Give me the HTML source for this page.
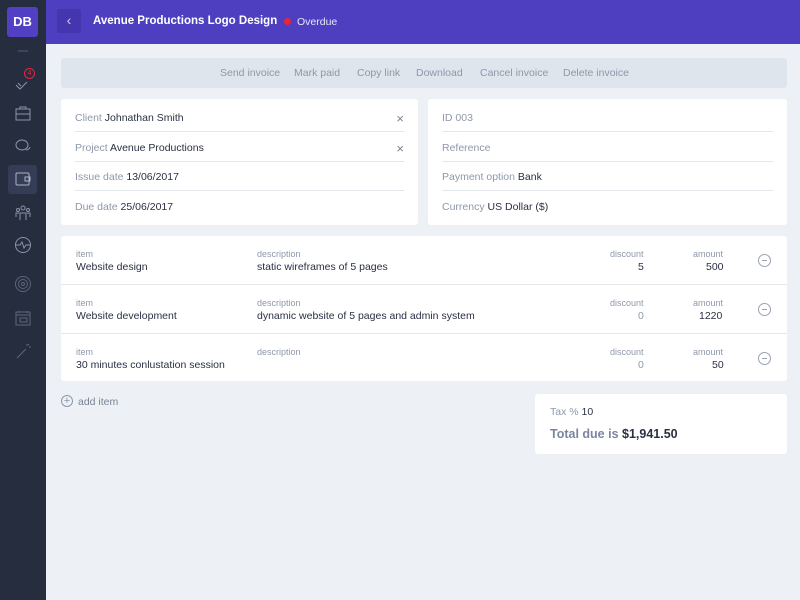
<!DOCTYPE html><html><head><style>
*{margin:0;padding:0;box-sizing:border-box}
body{width:800px;height:600px;background:#edf1f5;font-family:"Liberation Sans",sans-serif;position:relative;overflow:hidden;font-size:10.5px;color:#2a3042}
.side{position:absolute;left:0;top:0;width:46px;height:600px;background:#262d3f}
.logo{position:absolute;left:7px;top:7px;width:31px;height:30px;background:#5140c4;border-radius:3px;color:#fff;font-weight:bold;font-size:13px;text-align:center;line-height:30px}
.hdr{position:absolute;left:46px;top:0;width:754px;height:44px;background:#4e3fc0}
.back{position:absolute;left:11px;top:9px;width:24px;height:24px;background:#4536b0;border-radius:2px;color:#cfcbf0;font-size:14px;text-align:center;line-height:23px}
.title{position:absolute;left:47px;top:15px;color:#fff;font-weight:bold;font-size:11.5px}
.dot{position:absolute;left:238px;top:18px;width:7px;height:7px;border-radius:50%;background:#e8233e}
.od{position:absolute;left:251px;top:16px;color:#e8e6f8;font-size:10.5px}
.bar{position:absolute;left:61px;top:58px;width:726px;height:30px;background:#dfe5ec;border-radius:3px;color:#8e98ab;font-size:10.5px}
.bar span{position:absolute;top:9px}
.card{position:absolute;background:#fff;border-radius:3px}
.row{position:absolute;left:14px;right:14px;height:29px;border-bottom:1px solid #e3e7ec;line-height:31px}
.row.last{border:none}
.l{color:#8e98ab}
.x{position:absolute;right:0;color:#7a8396;font-size:13px}
.it{position:absolute;left:0;width:726px;height:49px;border-bottom:1px solid #e3e7ec}
.lab{position:absolute;top:13px;font-size:9px;color:#8e98ab}
.val{position:absolute;top:25px;font-size:10.5px}
.minus{position:absolute;left:697px;top:18px;width:13px;height:13px;border:1px solid #9aa2b2;border-radius:50%}
.minus:after{content:"";position:absolute;left:3px;top:5px;width:5px;height:1px;background:#9aa2b2}
.ic{position:absolute;left:13px;width:20px;height:20px}
</style></head><body>
<div class="side">
<div class="logo">DB</div>
<div style="position:absolute;left:18px;top:50px;width:10px;height:2px;background:#3c455a"></div>
<svg class="ic" style="top:72px" viewBox="0 0 20 20" fill="none" stroke="#8a93a8" stroke-width="1"><path d="M3 13l4 4 7-7M5 11l3 3"/></svg>
<div style="position:absolute;left:24px;top:68px;width:11px;height:11px;border-radius:50%;border:1px solid #e8233e;color:#e8233e;font-size:7px;text-align:center;line-height:9px">4</div>
<svg class="ic" style="top:104px" viewBox="0 0 20 20" fill="none" stroke="#8a93a8" stroke-width="1"><rect x="3" y="5" width="14" height="11"/><path d="M7 5V3h6v2M3 10h14"/></svg>
<svg class="ic" style="top:136px" viewBox="0 0 20 20" fill="none" stroke="#8a93a8" stroke-width="1"><ellipse cx="9" cy="9" rx="6" ry="5"/><path d="M13 14a5 4 0 0 0 4-3"/></svg>
<div style="position:absolute;left:8px;top:165px;width:29px;height:29px;background:#343d55;border-radius:3px"></div>
<svg class="ic" style="top:169px" viewBox="0 0 20 20" fill="none" stroke="#aab2c4" stroke-width="1"><rect x="3" y="4" width="13" height="12" rx="1"/><rect x="12" y="8" width="5" height="4"/></svg>
<svg class="ic" style="top:203px" viewBox="0 0 20 20" fill="none" stroke="#8a93a8" stroke-width="1"><circle cx="10" cy="5" r="2"/><circle cx="5" cy="7" r="1.5"/><circle cx="15" cy="7" r="1.5"/><path d="M7 17v-7h6v7M3 14v-4h3M17 14v-4h-3"/></svg>
<svg class="ic" style="top:235px" viewBox="0 0 20 20" fill="none" stroke="#8a93a8" stroke-width="1"><circle cx="10" cy="10" r="7.5"/><path d="M3 10h4l2-3 2 6 2-3h4"/></svg>
<svg class="ic" style="top:274px" viewBox="0 0 20 20" fill="none" stroke="#5d6679" stroke-width="1"><circle cx="10" cy="10" r="7.5"/><circle cx="10" cy="10" r="4.5"/><circle cx="10" cy="10" r="1.5"/></svg>
<svg class="ic" style="top:308px" viewBox="0 0 20 20" fill="none" stroke="#5d6679" stroke-width="1"><rect x="3" y="4" width="14" height="13"/><path d="M3 7h14M6 3v2M14 3v2M7 10h7v4H7z"/></svg>
<svg class="ic" style="top:341px" viewBox="0 0 20 20" fill="none" stroke="#5d6679" stroke-width="1"><path d="M4 17l9-9M14 3v2M16 6h2M15 4l1-1"/></svg>
</div>
<div class="hdr"><div class="back">&#8249;</div><div class="title">Avenue Productions Logo Design</div><div class="dot"></div><div class="od">Overdue</div></div>
<div class="bar"><span style="left:159px">Send invoice</span><span style="left:233px">Mark paid</span><span style="left:296px">Copy link</span><span style="left:355px">Download</span><span style="left:419px">Cancel invoice</span><span style="left:502px">Delete invoice</span></div>
<div class="card" style="left:61px;top:99px;width:357px;height:126px">
<div class="row" style="top:4px"><span class="l">Client</span> Johnathan Smith<span class="x">×</span></div>
<div class="row" style="top:34px"><span class="l">Project</span> Avenue Productions<span class="x">×</span></div>
<div class="row" style="top:63px"><span class="l">Issue date</span> 13/06/2017</div>
<div class="row last" style="top:93px"><span class="l">Due date</span> 25/06/2017</div>
</div>
<div class="card" style="left:428px;top:99px;width:359px;height:126px">
<div class="row" style="top:4px"><span class="l">ID</span> <span class="l">003</span></div>
<div class="row" style="top:34px"><span class="l">Reference</span></div>
<div class="row" style="top:63px"><span class="l">Payment option</span> Bank</div>
<div class="row last" style="top:93px"><span class="l">Currency</span> US Dollar ($)</div>
</div>
<div class="card" style="left:61px;top:236px;width:726px;height:145px">
<div class="it" style="top:0"><span class="lab" style="left:15px">item</span><span class="val" style="left:15px">Website design</span><span class="lab" style="left:196px">description</span><span class="val" style="left:196px">static wireframes of 5 pages</span><span class="lab" style="left:549px">discount</span><span class="val" style="left:577px">5</span><span class="lab" style="left:632px">amount</span><span class="val" style="left:645px">500</span><span class="minus"></span></div>
<div class="it" style="top:49px"><span class="lab" style="left:15px">item</span><span class="val" style="left:15px">Website development</span><span class="lab" style="left:196px">description</span><span class="val" style="left:196px">dynamic website of 5 pages and admin system</span><span class="lab" style="left:549px">discount</span><span class="val" style="left:577px;color:#8e98ab">0</span><span class="lab" style="left:632px">amount</span><span class="val" style="left:638px">1220</span><span class="minus"></span></div>
<div class="it" style="top:98px;border:none"><span class="lab" style="left:15px">item</span><span class="val" style="left:15px">30 minutes conlustation session</span><span class="lab" style="left:196px">description</span><span class="lab" style="left:549px">discount</span><span class="val" style="left:577px;color:#8e98ab">0</span><span class="lab" style="left:632px">amount</span><span class="val" style="left:651px">50</span><span class="minus"></span></div>
</div>
<div style="position:absolute;left:61px;top:395px;width:12px;height:12px;border:1px solid #8e98ab;border-radius:50%;color:#8e98ab;font-size:11px;line-height:10px;text-align:center">+</div>
<div style="position:absolute;left:78px;top:396px;color:#7a8396">add item</div>
<div class="card" style="left:535px;top:394px;width:252px;height:60px">
<div style="position:absolute;left:15px;top:12px"><span class="l">Tax %</span> 10</div>
<div style="position:absolute;left:15px;top:33px;font-size:12.5px;font-weight:bold"><span style="color:#7a86a0">Total due is</span> $1,941.50</div>
</div>
</body></html>
